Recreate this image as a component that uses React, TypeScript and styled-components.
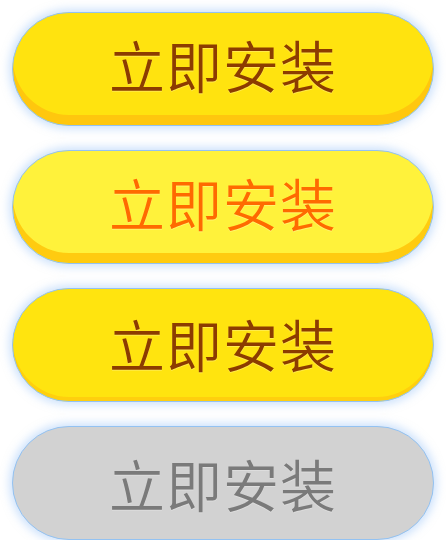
import React from "react";
import styled, { createGlobalStyle } from "styled-components";

const Global = createGlobalStyle`
  html, body { margin: 0; padding: 0; background: #ffffff; }
  body { font-family: "Noto Sans CJK SC", "Noto Sans", sans-serif; }
`;

const Stack = styled.div`
  display: flex;
  flex-direction: column;
  gap: 24px;
  padding: 12px 12px 0 12px;
  width: 446px;
  box-sizing: border-box;
`;

type Variant = "normal" | "hover" | "active" | "disabled";

const palette: Record<Variant, { face: string; band: string; depth: number; text: string }> = {
  normal: { face: "#ffe30f", band: "#ffc70e", depth: 10, text: "#8c3c00" },
  hover: { face: "#fff23b", band: "#ffcb10", depth: 10, text: "#ff6a00" },
  active: { face: "#ffe40f", band: "#ffcf0e", depth: 4, text: "#8c3c00" },
  disabled: { face: "#d2d2d2", band: "#d2d2d2", depth: 0, text: "#7a7a7a" },
};

const Button = styled.button<{ $v: Variant }>`
  display: flex;
  align-items: center;
  justify-content: center;
  width: 422px;
  height: 114px;
  border-radius: 57px;
  border: 1px solid #93c2f2;
  box-sizing: border-box;
  background: ${(p) => palette[p.$v].face};
  box-shadow: inset 0 -${(p) => palette[p.$v].depth}px 0 ${(p) => palette[p.$v].band},
    0 0 9px 3px rgba(160, 200, 250, 0.5);
  padding: 0 0 ${(p) => palette[p.$v].depth}px 0;
  font-family: "Noto Sans CJK SC", "Noto Sans", sans-serif;
  font-size: 56px;
  font-weight: 350;
  letter-spacing: 1px;
  color: ${(p) => palette[p.$v].text};
  text-shadow: 0 1px 0 rgba(255, 255, 255, 0.25);
  cursor: ${(p) => (p.$v === "disabled" ? "default" : "pointer")};
`;

const Label = styled.span`
  line-height: 1;
  display: block;
`;

export default function App() {
  const variants: Variant[] = ["normal", "hover", "active", "disabled"];
  return (
    <>
      <Global />
      <Stack>
        {variants.map((v) => (
          <Button key={v} $v={v}>
            <Label>立即安装</Label>
          </Button>
        ))}
      </Stack>
    </>
  );
}
